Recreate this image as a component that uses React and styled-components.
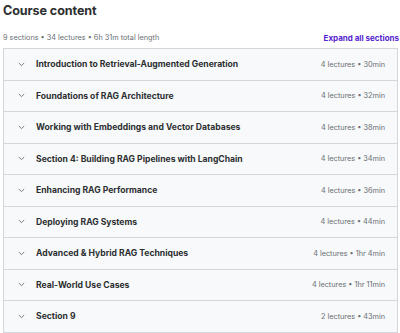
import React from 'react';
import styled, { createGlobalStyle } from 'styled-components';

const GlobalStyle = createGlobalStyle`
  body {
    margin: 0;
    background: #ffffff;
    font-family: Inter, "Noto Sans", sans-serif;
    color: #2d2f31;
  }
`;

const Page = styled('div')`
  padding: 0 2px 0 3px;
  width: 400px;
  box-sizing: border-box;
`;

const Title = styled('h2')`
  margin: 0;
  padding-top: 3px;
  height: 24px;
  font-size: 12.6px;
  font-weight: 700;
  letter-spacing: -0.1px;
  line-height: 16px;
`;

const SummaryBar = styled('div')`
  display: flex;
  align-items: center;
  justify-content: space-between;
  height: 21px;
  margin-right: -1px;
`;

const Summary = styled('span')`
  font-size: 7.3px;
  color: #6a6f73;
`;

const ExpandLink = styled('button')`
  border: 0;
  background: none;
  padding: 0;
  font-family: inherit;
  font-size: 8px;
  font-weight: 700;
  color: #5624d0;
  cursor: pointer;
  white-space: nowrap;
`;

const SectionList = styled('div')`
  border: 1px solid #d1d7dc;
  border-bottom: 0;
`;

const Row = styled('div')`
  display: flex;
  align-items: center;
  height: 30.5px;
  padding: 0 12px 0 14px;
  background: #f7f9fa;
  border-bottom: 1px solid #d1d7dc;
`;

const Chevron = styled('svg')`
  width: 7px;
  height: 5px;
  flex: none;
  margin-right: 11px;
`;

const SectionTitle = styled('span')`
  flex: 1;
  font-size: 8.6px;
  font-weight: 700;
  color: #2d2f31;
  white-space: nowrap;
  overflow: hidden;
`;

const Meta = styled('span')`
  font-size: 7.3px;
  color: #6a6f73;
  white-space: nowrap;
`;

const sections = [
  { title: 'Introduction to Retrieval-Augmented Generation', meta: '4 lectures • 30min' },
  { title: 'Foundations of RAG Architecture', meta: '4 lectures • 32min' },
  { title: 'Working with Embeddings and Vector Databases', meta: '4 lectures • 38min' },
  { title: 'Section 4: Building RAG Pipelines with LangChain', meta: '4 lectures • 34min' },
  { title: 'Enhancing RAG Performance', meta: '4 lectures • 36min' },
  { title: 'Deploying RAG Systems', meta: '4 lectures • 44min' },
  { title: 'Advanced & Hybrid RAG Techniques', meta: '4 lectures • 1hr 4min' },
  { title: 'Real-World Use Cases', meta: '4 lectures • 1hr 11min' },
  { title: 'Section 9', meta: '2 lectures • 43min' },
];

export default function App() {
  return (
    <Page>
      <GlobalStyle />
      <Title>Course content</Title>
      <SummaryBar>
        <Summary>9 sections • 34 lectures • 6h 31m total length</Summary>
        <ExpandLink>Expand all sections</ExpandLink>
      </SummaryBar>
      <SectionList>
        {sections.map((s, i) => (
          <Row key={i}>
            <Chevron viewBox="0 0 7 5">
              <path d="M0.8 1 L3.5 3.6 L6.2 1" fill="none" stroke="#6a6f73" strokeWidth="0.9" />
            </Chevron>
            <SectionTitle>{s.title}</SectionTitle>
            <Meta>{s.meta}</Meta>
          </Row>
        ))}
      </SectionList>
    </Page>
  );
}
